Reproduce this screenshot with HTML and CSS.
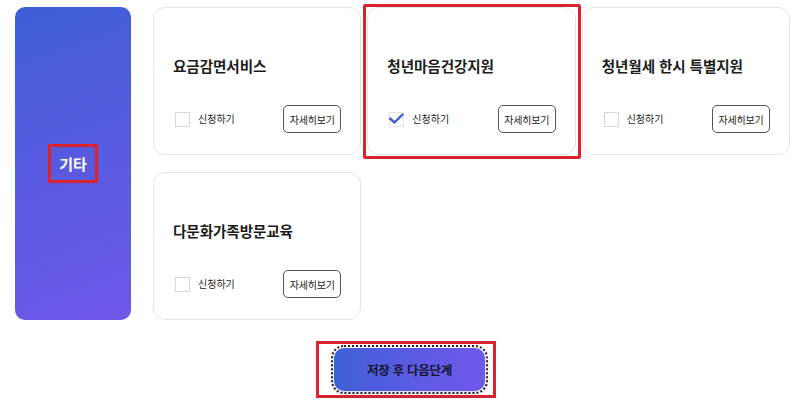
FILE: index.html
```html
<!DOCTYPE html>
<html lang="ko">
<head>
<meta charset="utf-8">
<title>서비스 선택</title>
<link rel="stylesheet" href="styles.css">
</head>
<body>
<div class="page">
  <div class="layout">
    <aside class="category"><span class="category-label">기타</span></aside>
    <div class="cards">
      <div class="card">
        <h3 class="card-title">요금감면서비스</h3>
        <div class="card-row">
          <label class="apply"><span class="checkbox"></span><span class="apply-text">신청하기</span></label>
          <button class="detail-btn">자세히보기</button>
        </div>
      </div>
      <div class="card card-marked">
        <h3 class="card-title">청년마음건강지원</h3>
        <div class="card-row">
          <label class="apply"><span class="checkbox checked"><svg class="check-icon" width="18" height="14" viewBox="0 0 18 14"><path d="M2 5.5 L6.5 9.5 L14.5 1.5" fill="none" stroke="#3d5bd4" stroke-width="2.4" stroke-linecap="round" stroke-linejoin="round"/></svg></span><span class="apply-text">신청하기</span></label>
          <button class="detail-btn">자세히보기</button>
        </div>
      </div>
      <div class="card">
        <h3 class="card-title">청년월세 한시 특별지원</h3>
        <div class="card-row">
          <label class="apply"><span class="checkbox"></span><span class="apply-text">신청하기</span></label>
          <button class="detail-btn">자세히보기</button>
        </div>
      </div>
      <div class="card">
        <h3 class="card-title">다문화가족방문교육</h3>
        <div class="card-row">
          <label class="apply"><span class="checkbox"></span><span class="apply-text">신청하기</span></label>
          <button class="detail-btn">자세히보기</button>
        </div>
      </div>
    </div>
  </div>
  <div class="actions">
    <div class="action-frame">
      <button class="next-btn">저장 후 다음단계</button>
    </div>
  </div>
</div>
</body>
</html>
```

FILE: styles.css
```css
* { box-sizing: border-box; }

html, body {
  margin: 0;
  padding: 0;
  background: #ffffff;
  font-family: "Noto Sans CJK KR", "Noto Sans", sans-serif;
  color: #222;
}

.page {
  width: 800px;
  height: 413px;
  padding: 7px 10px 0 15px;
  overflow: hidden;
}

.layout {
  display: flex;
  gap: 22px;
}

.category {
  width: 116px;
  height: 313px;
  border-radius: 10px;
  background: linear-gradient(160deg, #3f5fd8 0%, #5a5ae0 55%, #6e58ea 100%);
  display: flex;
  align-items: center;
  justify-content: center;
  flex-shrink: 0;
}

.category-label {
  color: #ffffff;
  font-weight: 700;
  font-size: 15px;
  line-height: 21px;
  padding: 6px 8px;
  border: 3px solid #d9232e;
}

.cards {
  flex: 1;
  display: grid;
  grid-template-columns: repeat(3, 1fr);
  grid-auto-rows: 148px;
  column-gap: 6px;
  row-gap: 17px;
}

.card {
  position: relative;
  background: #fff;
  border: 1px solid #e4e5e9;
  border-radius: 12px;
  padding: 48px 19px 0 19px;
}

.card-marked::after {
  content: "";
  position: absolute;
  left: -5px;
  right: -6px;
  top: -4px;
  bottom: -5px;
  border: 3px solid #d9232e;
  border-radius: 2px;
  pointer-events: none;
}

.card-title {
  margin: 0 0 29px 0;
  font-size: 14.6px;
  line-height: 20px;
  font-weight: 700;
  color: #1c1c1c;
  letter-spacing: -0.1px;
  white-space: nowrap;
}

.card-row {
  display: flex;
  align-items: center;
  justify-content: space-between;
  height: 28px;
}

.apply {
  display: flex;
  align-items: center;
  padding-left: 2px;
}

.checkbox {
  position: relative;
  width: 15px;
  height: 15px;
  border: 1px solid #d3d6de;
  background: #fff;
  display: inline-block;
}

.checkbox.checked {
  border-color: #e3e5ec;
}

.check-icon {
  position: absolute;
  left: -2px;
  top: 0px;
}

.apply-text {
  margin-left: 8px;
  font-size: 10px;
  line-height: 14px;
  color: #222;
}

.detail-btn {
  width: 58px;
  height: 28px;
  border: 1px solid #555;
  border-radius: 5px;
  background: #fff;
  font-family: inherit;
  font-size: 10px;
  color: #222;
  padding: 0;
  letter-spacing: -0.2px;
}

.actions {
  display: flex;
  justify-content: center;
  margin-top: 21px;
  padding-left: 7px;
}

.action-frame {
  border: 3px solid #d9232e;
  padding: 4px 8px 4px 15px;
}

.next-btn {
  display: block;
  width: 151px;
  height: 43px;
  border: none;
  border-radius: 10px;
  background: linear-gradient(90deg, #3f5fd8 0%, #5b5be2 50%, #6f58ea 100%);
  color: #15152e;
  font-family: inherit;
  font-weight: 700;
  font-size: 12.5px;
  letter-spacing: -0.3px;
  outline: 2px dotted #222;
  outline-offset: 1px;
  box-shadow: 0 2px 6px rgba(70, 70, 150, 0.25);
}
```
